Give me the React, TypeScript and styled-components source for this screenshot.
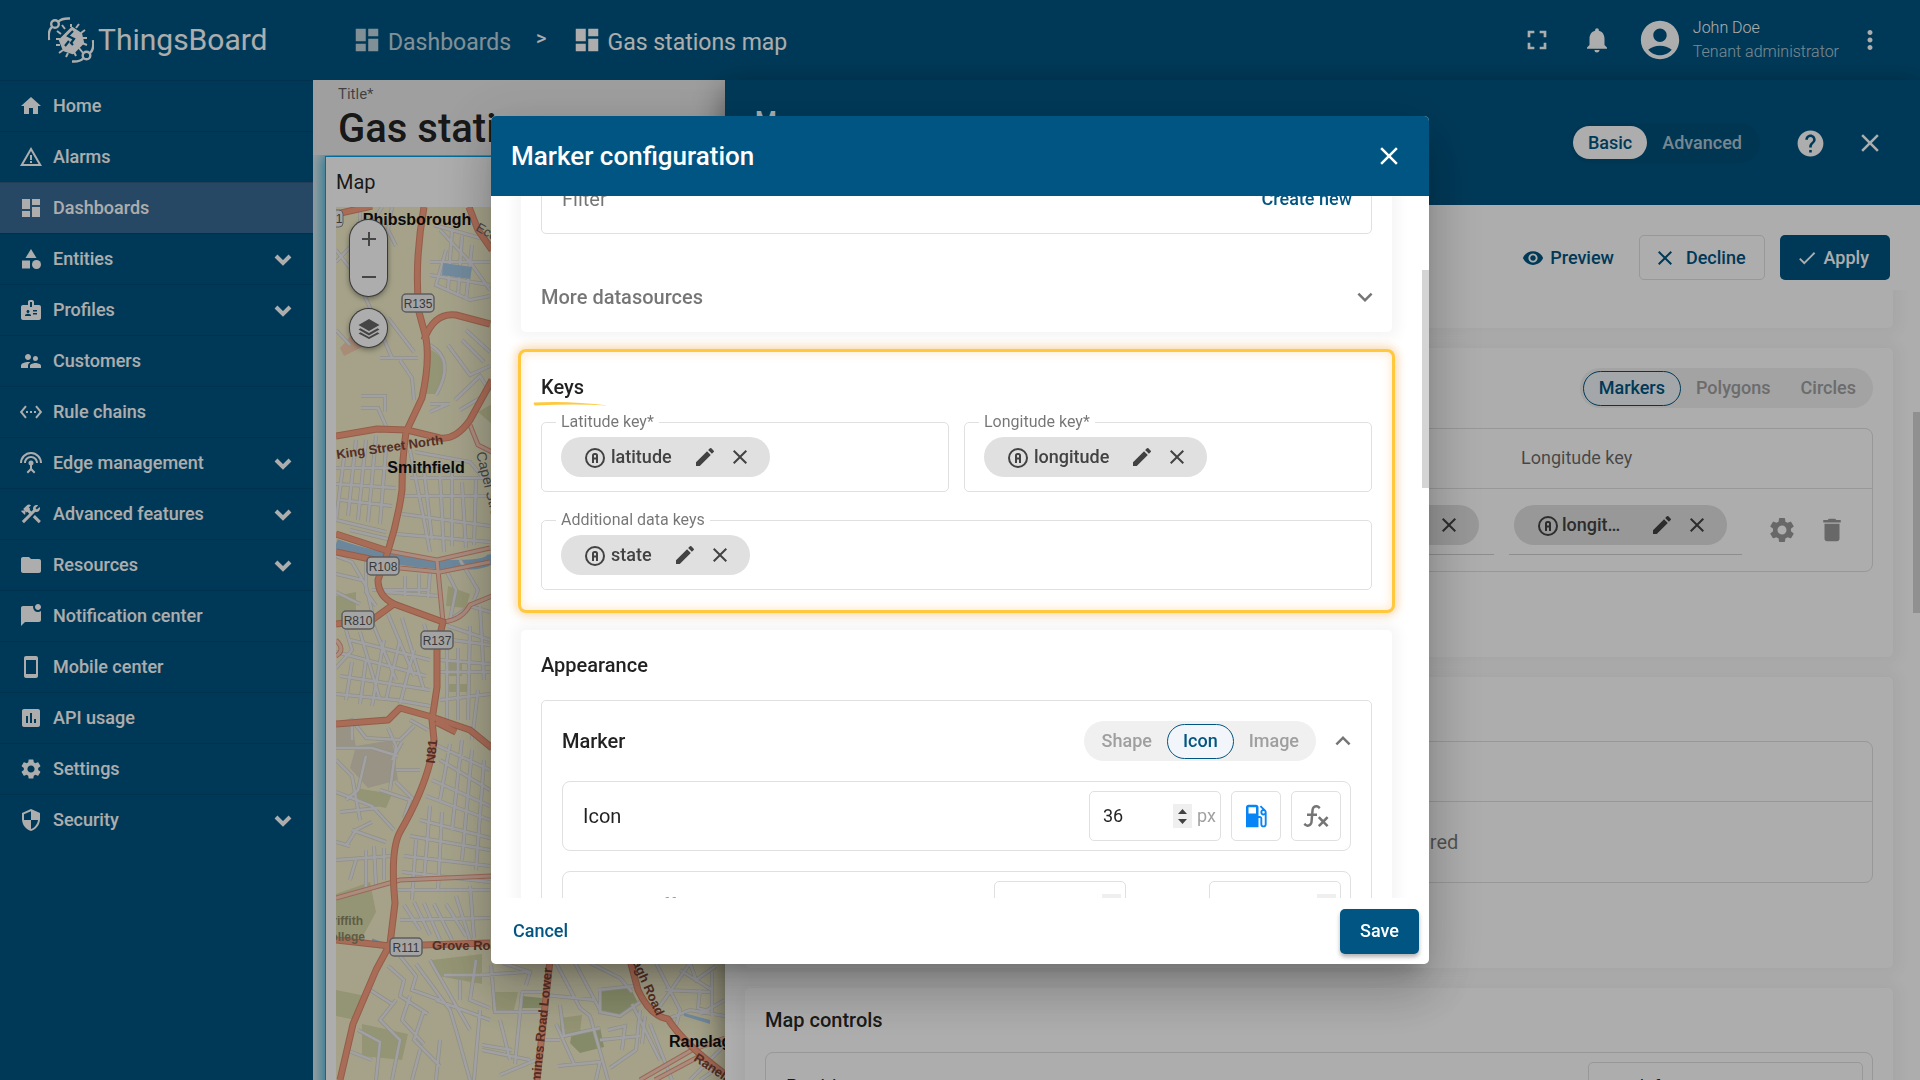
import React, { useLayoutEffect, useRef } from "react";
import styled, { createGlobalStyle, css } from "styled-components";
import type { IconType } from "react-icons";
import {
  MdAccountCircle,
  MdBadge,
  MdCategory,
  MdCheck,
  MdClose,
  MdConstruction,
  MdDashboard,
  MdDelete,
  MdEdit,
  MdExpandLess,
  MdExpandMore,
  MdFolder,
  MdFullscreen,
  MdHelp,
  MdHome,
  MdInsertChart,
  MdLocalGasStation,
  MdMarkChatUnread,
  MdMoreVert,
  MdNotifications,
  MdSecurity,
  MdSettings,
  MdSettingsEthernet,
  MdSettingsInputAntenna,
  MdStayCurrentPortrait,
  MdSupervisorAccount,
  MdVisibility,
  MdWarningAmber,
} from "react-icons/md";

const primary = "#005582";
const line = "#e0e0e0";

const GlobalStyle = createGlobalStyle`
  *, *::before, *::after { box-sizing: border-box; }
  body {
    margin: 0;
    font-family: Roboto, "Liberation Sans", sans-serif;
    font-size: 18px;
    line-height: 24px;
    color: rgba(0, 0, 0, 0.87);
  }
  button, input, select { font: inherit; color: inherit; }
  button { border: 0; padding: 0; background: none; cursor: pointer; }
  svg { display: block; flex: none; }
`;

/* ---------- shell ---------- */

const Page = styled.div`
  display: grid;
  grid-template-columns: 313px minmax(0, 1fr);
  height: 100vh;
  overflow: hidden;
  background: #ebebeb;
`;

const Sidebar = styled.aside`
  background: ${primary};
  color: #fff;
`;

const Logo = styled.div`
  display: flex;
  align-items: center;
  gap: 4px;
  height: 80px;
  padding-left: 48px;
  font-size: 30px;
  line-height: 36px;
`;

const Menu = styled.nav`
  display: flex;
  flex-direction: column;
`;

const MenuLink = styled.a<{ $active?: boolean }>`
  display: flex;
  align-items: center;
  gap: 10px;
  height: 51px;
  padding: 0 18px 0 19px;
  border-top: 1px solid rgba(0, 0, 0, 0.12);
  background: ${(p) => (p.$active ? "#3a6a96" : "transparent")};
  color: #fff;
  font-weight: 500;
  text-decoration: none;
  span { flex: 1; }
`;

const Main = styled.div`
  display: grid;
  grid-template-rows: 80px minmax(0, 1fr);
  min-width: 0;
`;

const TopBar = styled.header`
  display: flex;
  align-items: center;
  justify-content: space-between;
  padding: 0 35px 0 39px;
  background: ${primary};
  color: #fff;
`;

const Crumbs = styled.nav`
  display: flex;
  align-items: center;
  font-size: 23px;
  b { margin: -4px 25px 0; font-weight: 500; font-size: 20px; }
`;

const Crumb = styled.a<{ $dim?: boolean }>`
  display: flex;
  align-items: center;
  gap: 6px;
  color: #fff;
  opacity: ${(p) => (p.$dim ? 0.75 : 1)};
  text-decoration: none;
  span { padding-top: 5px; }
`;

const TopActions = styled.div`
  display: flex;
  align-items: center;
  gap: 25px;
`;

const User = styled.div`
  display: flex;
  align-items: center;
  gap: 10px;
  margin-right: -9px;
  font-size: 16px;
  font-weight: 300;
  small { display: block; font-size: 16px; opacity: 0.7; }
`;

const Content = styled.main`
  display: grid;
  grid-template-columns: minmax(0, 412fr) minmax(0, 1195fr);
  min-height: 0;
`;

const IconButton = styled.button<{ $size?: number }>`
  display: grid;
  place-items: center;
  width: ${(p) => p.$size ?? 30}px;
  height: ${(p) => p.$size ?? 30}px;
`;

/* ---------- dashboard ---------- */

const Dashboard = styled.section`
  display: grid;
  grid-template-rows: 75px minmax(0, 1fr);
  min-height: 0;
  overflow: hidden;
`;

const TitleBar = styled.div`
  padding: 5px 25px 0;
  overflow: hidden;
  white-space: nowrap;
  span { display: block; font-size: 15px; line-height: 18px; color: rgba(0, 0, 0, 0.6); }
  h1 { margin: 0; font-size: 40px; line-height: 52px; font-weight: 500; }
`;

const Canvas = styled.div`
  padding: 1px 0 0 12px;
  overflow: hidden;
`;

const Widget = styled.article`
  display: flex;
  flex-direction: column;
  width: 150%;
  height: 120%;
  padding: 0 10px;
  border: 1px solid #00a1e6;
  background: #fff;
  box-shadow: 0 0 14px 3px #2aaeda;
  h2 { margin: 0; padding: 13px 0; font-size: 20px; line-height: 24px; font-weight: 400; }
`;

const MapBox = styled.div`
  position: relative;
  flex: 1;
  overflow: hidden;
  background: #f4efcb;
`;

const MapControls = styled.div`
  position: absolute;
  top: 13px;
  left: 14px;
  display: flex;
  flex-direction: column;
  gap: 13px;
`;

const Pill = styled.div`
  display: flex;
  flex-direction: column;
  width: 37px;
  border-radius: 19px;
  background: #fff;
  color: #666;
  box-shadow: 0 0 0 1px #555, 0 2px 6px rgba(0, 0, 0, 0.5);
  button { display: grid; place-items: center; height: 38px; }
`;

/* ---------- details panel ---------- */

const Panel = styled.section`
  position: relative;
  display: flex;
  flex-direction: column;
  min-height: 0;
  background: #fff;
  box-shadow: 0 10px 30px rgba(0, 0, 0, 0.5);
`;

const PanelHeader = styled.header`
  display: flex;
  align-items: center;
  height: 125px;
  padding: 0 35px 0 30px;
  background: ${primary};
  color: #fff;
  h2 { flex: 1; margin: 0 0 42px; font-size: 25px; line-height: 30px; font-weight: 500; }
`;

const PanelButtons = styled.div`
  display: flex;
  justify-content: flex-end;
  gap: 15px;
  padding: 30px 30px 10px;
`;

const Button = styled.button<{ $kind?: "flat" | "outline" | "solid" }>`
  display: flex;
  align-items: center;
  gap: 6px;
  height: 45px;
  padding: 0 20px;
  border-radius: 5px;
  color: ${primary};
  font-weight: 500;
  ${(p) => p.$kind === "outline" && css`gap: 9px; padding: 0 18px 0 13px; border: 1px solid ${line};`}
  ${(p) =>
    p.$kind === "solid" &&
    css`background: ${primary}; color: #fff; box-shadow: 0 3px 4px rgba(0, 0, 0, 0.3);`}
`;

const ApplyButton = styled(Button)`
  padding: 0 21px 0 16px;
  box-shadow: none;
`;

const PreviewButton = styled(Button)`
  padding: 0 10px;
`;

const PanelBody = styled.div`
  display: flex;
  flex: 1;
  flex-direction: column;
  gap: 20px;
  min-height: 0;
  padding: 0 27px 0 20px;
  overflow: hidden;
`;

const Card = styled.section<{ $height?: number }>`
  flex: none;
  min-height: ${(p) => p.$height ?? 0}px;
  padding: 20px;
  border-radius: 5px;
  background: #fff;
  box-shadow: 0 0 13px 7px rgba(11, 17, 51, 0.04);
`;

const CutCard = styled(Card)`
  padding: 0;
  border-radius: 0 0 5px 5px;
`;

const CardTitle = styled.h3<{ $tall?: boolean }>`
  margin: 0 0 20px;
  font-size: 20px;
  line-height: ${(p) => (p.$tall ? 30 : 24)}px;
  font-weight: 500;
`;

const CardTop = styled.div`
  display: flex;
  align-items: center;
  justify-content: space-between;
  margin-bottom: 20px;
  ${CardTitle} { margin: 0; }
`;

const Frame = styled.div`
  border: 1px solid ${line};
  border-radius: 8px;
`;

const KeyTable = styled.table`
  width: 100%;
  border-collapse: collapse;
  table-layout: fixed;
  th {
    height: 59px;
    padding: 0 19px;
    border-bottom: 1px solid ${line};
    color: rgba(0, 0, 0, 0.6);
    font-weight: 400;
    text-align: left;
  }
  td { height: 82px; padding: 16px 8px 16px 7px; vertical-align: top; }
  col.key { width: 248px; }
  col.actions { width: 122px; }
`;

const KeyCell = styled.div`
  display: flex;
  height: 50px;
  padding: 0 15px 0 5px;
  border-bottom: 1px solid #d0d0d0;
`;

const RowActions = styled.div`
  display: flex;
  color: #9a9a9a;
`;

const EmptyTable = styled(Frame)`
  height: 142px;
  padding-top: 59px;
  p {
    display: grid;
    place-items: center;
    height: 80px;
    margin: 0;
    border-top: 1px solid ${line};
    color: rgba(0, 0, 0, 0.54);
    font-size: 20px;
  }
`;

const SettingRow = styled(Frame)`
  display: flex;
  align-items: center;
  gap: 10px;
  height: 70px;
  padding: 0 9px 0 20px;
  font-size: 20px;
  > span:first-child { flex: 1; }
`;

const PositionSelect = styled.select`
  width: 275px;
  height: 50px;
  padding: 0 16px;
  border: 1px solid ${line};
  border-radius: 5px;
  background: #fff;
  appearance: none;
  font-size: 18px;
`;

const Thumb = styled.div<{ $top: number; $height: number }>`
  position: absolute;
  right: 0;
  top: ${(p) => p.$top}px;
  width: 7px;
  height: ${(p) => p.$height}px;
  background: #d4d4d4;
`;

/* ---------- toggle ---------- */

const ToggleBox = styled.div<{ $dark?: boolean }>`
  display: flex;
  align-items: center;
  height: 40px;
  padding: 0 ${(p) => (p.$dark ? 3 : 2)}px 0 3px;
  border-radius: 20px;
  background: ${(p) => (p.$dark ? "rgba(0, 0, 0, 0.06)" : "#f0f0f0")};
`;

const ToggleItem = styled.button<{ $dark?: boolean; $on?: boolean }>`
  height: 35px;
  padding: 0 15px;
  border-radius: 18px;
  color: ${(p) => (p.$dark ? "rgba(255, 255, 255, 0.7)" : "#9f9f9f")};
  font-weight: 500;
  ${(p) =>
    p.$on &&
    (p.$dark
      ? css`height: 33px; background: #fff; color: ${primary};`
      : css`border: 1px solid ${primary}; background: #f2f6fa; color: ${primary};`)}
`;

function Toggle({ items, on, dark }: { items: string[]; on: string; dark?: boolean }) {
  return (
    <ToggleBox $dark={dark} role="group">
      {items.map((name) => (
        <ToggleItem key={name} type="button" $dark={dark} $on={name === on} aria-pressed={name === on}>
          {name}
        </ToggleItem>
      ))}
    </ToggleBox>
  );
}

/* ---------- key chip ---------- */

const ChipBox = styled.div<{ $fill?: boolean }>`
  display: flex;
  align-items: center;
  width: ${(p) => (p.$fill ? "100%" : "auto")};
  height: 40px;
  padding: 0 18px 0 22px;
  border-radius: 20px;
  background: #e0e0e0;
  color: #424242;
  font-weight: 500;
`;

const ChipName = styled.span<{ $fill?: boolean }>`
  flex: ${(p) => (p.$fill ? 1 : "none")};
  min-width: 0;
  margin: 0 21px 0 ${(p) => (p.$fill ? 2 : 4)}px;
  overflow: hidden;
  text-overflow: ellipsis;
  white-space: nowrap;
`;

const ChipClose = styled(IconButton)`
  margin-left: 11px;
`;

function Chip({ name, fill }: { name: string; fill?: boolean }) {
  return (
    <ChipBox $fill={fill}>
      <svg width="24" height="24" viewBox="0 0 24 24" fill="none" stroke="currentColor" strokeWidth="2">
        <circle cx="12" cy="13" r="9" />
        <path d="M10 18v-7.500q0-1.500 1.500-1.500h1q1.500 0 1.500 1.500v7.500M10 13.500h4" />
      </svg>
      <ChipName $fill={fill}>{name}</ChipName>
      <IconButton type="button" $size={24} aria-label={`Edit ${name}`}><MdEdit size={24} /></IconButton>
      <ChipClose type="button" $size={24} aria-label={`Remove ${name}`}><MdClose size={24} /></ChipClose>
    </ChipBox>
  );
}

/* ---------- dialog ---------- */

const Backdrop = styled.div`
  position: fixed;
  inset: 0;
  display: flex;
  align-items: center;
  justify-content: center;
  background: rgba(0, 0, 0, 0.32);
`;

const Dialog = styled.div`
  width: 938px;
  max-width: 90vw;
  overflow: hidden;
  border-radius: 5px;
  background: #fff;
`;

const DialogShadow = styled.div`
  border-radius: 5px;
  box-shadow:
    0 14px 19px -9px rgba(0, 0, 0, 0.2),
    0 30px 48px 4px rgba(0, 0, 0, 0.14),
    0 11px 58px 10px rgba(0, 0, 0, 0.12);
`;

const DialogHeader = styled.header`
  display: flex;
  align-items: center;
  justify-content: space-between;
  height: 80px;
  padding: 0 25px 0 20px;
  background: ${primary};
  color: #fff;
  h2 { margin: 0; font-size: 26px; line-height: 32px; font-weight: 500; }
`;

const DialogMiddle = styled.div`
  position: relative;
`;

const DialogBody = styled.div`
  display: flex;
  flex-direction: column;
  gap: 20px;
  height: 65vh;
  padding: 30px 37px 30px 30px;
  overflow-y: auto;
  scrollbar-width: none;
`;

const DialogFooter = styled.footer`
  display: flex;
  align-items: center;
  justify-content: space-between;
  height: 66px;
  padding: 0 10px 0 2px;
`;

const Fields = styled.div`
  display: grid;
  grid-template-columns: 1fr 1fr;
  gap: 28px 15px;
`;

const Field = styled.fieldset<{ $wide?: boolean }>`
  display: flex;
  grid-column: ${(p) => (p.$wide ? "1 / -1" : "auto")};
  height: 80px;
  margin: -10px 0 0;
  padding: 5px 19px;
  border: 1px solid ${line};
  border-radius: 5px;
  legend {
    margin-left: -5px;
    padding: 0 5px;
    font-size: 16px;
    line-height: 20px;
    color: rgba(0, 0, 0, 0.54);
  }
`;

const FilterField = styled.div`
  display: flex;
  align-items: center;
  height: 70px;
  padding: 0 19px 0 20px;
  border: 1px solid ${line};
  border-radius: 5px;
  input { flex: 1; border: 0; outline: 0; padding: 0; font-size: 20px; }
  input::placeholder { color: rgba(0, 0, 0, 0.54); opacity: 1; }
  button { color: ${primary}; font-weight: 500; }
`;

const FilterCard = styled(Card)`
  padding-bottom: 0;
`;

const MoreRow = styled.button`
  display: flex;
  align-items: center;
  justify-content: space-between;
  width: 100%;
  height: 70px;
  margin-top: 28px;
  color: rgba(0, 0, 0, 0.54);
  font-size: 20px;
  font-weight: 500;
  svg { margin-right: -8px; }
`;

const KeysCard = styled(Card)`
  box-shadow:
    0 0 0 3px #ffc83d,
    0 0 10px 5px rgba(255, 170, 60, 0.4),
    inset 0 0 8px 2px rgba(255, 170, 60, 0.22),
    0 0 13px 7px rgba(11, 17, 51, 0.04);
`;

const KeysTitle = styled(CardTitle)`
  position: relative;
  svg { position: absolute; left: -8px; top: 29px; }
`;

const MarkerBox = styled(Frame)`
  display: flex;
  flex-direction: column;
  gap: 20px;
  padding: 20px;
  border-radius: 5px;
`;

const MarkerTop = styled.div`
  display: flex;
  align-items: center;
  height: 40px;
  h4 { flex: 1; margin: 0; font-size: 20px; font-weight: 500; }
  button[aria-label] { margin: 0 -7px 0 12px; color: #757575; }
`;

const NumberShell = styled.div`
  display: flex;
  align-items: center;
  gap: 5px;
  width: 132px;
  height: 50px;
  padding: 0 4px 0 13px;
  border: 1px solid ${line};
  border-radius: 5px;
  font-size: 18px;
  input {
    flex: 1;
    width: 0;
    padding: 0;
    border: 0;
    outline: 0;
    appearance: textfield;
  }
  input::-webkit-inner-spin-button { display: none; }
  svg { background: #efefef; }
  span { color: rgba(0, 0, 0, 0.38); }
`;

const SquareButton = styled(IconButton)<{ $blue?: boolean }>`
  border: 1px solid ${line};
  border-radius: 5px;
  color: ${(p) => (p.$blue ? "#0784f5" : "#757575")};
`;

const OffsetLabel = styled.label`
  display: flex;
  align-items: center;
  gap: 12px;
  color: rgba(0, 0, 0, 0.54);
  font-size: 18px;
`;

function NumberField({ value, label, unit }: { value: number; label?: string; unit?: string }) {
  return (
    <NumberShell>
      <input type="number" defaultValue={value} aria-label={label} />
      <svg width="19" height="24" viewBox="0 0 19 24" fill="#424242">
        <path d="M5 10l4.500-5 4.500 5zM5 15l4.500 5 4.500-5z" />
      </svg>
      {unit && <span>{unit}</span>}
    </NumberShell>
  );
}

/* ---------- drawings ---------- */

function LogoMark() {
  return (
    <svg width="46" height="46" viewBox="0 0 46 46" fill="none" stroke="#fff" strokeWidth="2.400">
      <path d="M1 23C0 15 2 11 5 9.500" />
      <circle cx="7" cy="7" r="3.800" />
      <path d="M10.500 4.500Q14 1 22 1.500" />
      <path d="M45 23C46 31 44 35 41 36.500" />
      <circle cx="38.500" cy="38.500" r="3.800" />
      <path d="M35 41.500Q32 45 24 44.500" />
      <path d="M24 11l9 6 2 9-10 10-9-3-4-10z" fill="#fff" strokeLinejoin="round" />
      <path strokeWidth="2" d="M17 12l-3-4M23 10V7M28 11l3-4M33 16l4-3M35 21h4M34 26l5 2M31 31l4 5M26 35l2 4M20 36l-2 4M15 33l-4 3M12 28H8M12 22H8M13 17l-4-3" />
      <path stroke={primary} strokeWidth="2.200" d="M25 14l-5 5 6 3-3 4 2 2M17 29l4-5" />
    </svg>
  );
}

function Chevron() {
  return (
    <svg width="24" height="24" viewBox="0 0 24 24" fill="none" stroke="currentColor" strokeWidth="4">
      <path d="M5 9l7 7 7-7" />
    </svg>
  );
}

function FunctionIcon() {
  return (
    <svg width="30" height="30" viewBox="0 0 24 24" fill="currentColor">
      <path d="M12.420 5.290C11.320 5.190 10.350 6 10.250 7.110L10 10H12.820V12H9.820L9.380 17.070C9.180 19.270 7.240 20.900 5.040 20.700C3.790 20.590 2.660 19.900 2 18.830L3.500 17.330C3.830 18.380 4.960 18.970 6 18.630C6.780 18.390 7.330 17.700 7.400 16.890L7.820 12H4.820V10H8L8.270 6.930C8.460 4.730 10.390 3.100 12.600 3.280C13.860 3.390 15 4.090 15.660 5.170L14.160 6.670C13.910 5.900 13.230 5.360 12.420 5.290M22 13.650L20.590 12.240L17.760 15.070L14.930 12.240L13.500 13.650L16.350 16.500L13.500 19.330L14.930 20.740L17.760 17.910L20.590 20.740L22 19.330L19.170 16.500L22 13.650Z" />
    </svg>
  );
}

function LayersIcon() {
  return (
    <svg width="24" height="22" viewBox="0 0 24 22" fill="currentColor">
      <path d="M12 2L1.500 8 12 14l10.500-6zM20.500 11.200L12 16l-8.500-4.800-2 1.200L12 18.400l10.500-6zM20.500 15.200L12 20l-8.500-4.800-2 1.200L12 22l10.500-5.600z" />
    </svg>
  );
}

const streets = [
  "M336 262L352 245 372 224 382 207M336 250L350 268 362 290 380 330 392 358M360 207V228M392 207L388 230 396 246",
  "M430 262H490M440 230L470 262 490 290M446 250L436 285 470 300 490 296M452 230L448 290M462 236L458 296M430 275L490 285M434 225L480 238M472 245L466 300",
  "M388 318L414 352M380 358H418M336 330L350 345M361 396H385V412M361 408H378L386 426M400 360L412 378 414 400",
  "M430 345Q456 360 436 395M448 345L470 375 490 366M430 404H450M455 400L480 376 490 392M460 410L485 395M430 412L448 404M466 330L490 352M462 340L484 362",
  "M345 450L336 520M356 440L348 516M366 440L358 520M376 436L368 522M386 448L380 524M336 468H400M336 484L396 488M340 500L392 506M336 520L386 532M350 530L392 540",
  "M410 450L424 520 430 552M424 470L432 540M440 476L444 552M452 470V546M462 482L466 548M476 480L474 545M410 478H490M404 496H490M402 514L490 526M396 534L490 542M415 452L470 462 490 486M412 466H440",
  "M336 556L352 562 366 586 372 612M336 574L362 580M366 560L366 592 376 606M372 590H428M384 592L440 596M405 576V596M419 574V594M430 572L428 598M336 592L360 604",
  "M446 570L456 590 450 620 470 606 490 612M460 560L478 590 474 600M448 626L490 640M452 640L490 645M470 626L468 720M480 606L484 680M440 660L490 664M440 672H490M440 700L490 694M447 650V720M458 648V720M478 690L472 740",
  "M346 630L352 650 336 668M360 632L380 700M372 622L396 680M388 614L414 676M402 618L424 690M350 640L430 660M336 652L426 676M340 676L430 690M352 662L346 700M366 660L360 704M336 694L396 700 430 706M384 640L372 706M400 640L386 700M414 650L400 704M424 624L432 650",
  "M336 726L352 720 366 738 400 740 414 726M352 722V740M336 748L372 748 398 756M366 756L358 790 346 800M388 728L396 746 390 790M402 742L392 760M410 720L428 730M336 760L352 776 360 820M396 770L420 770M396 782L414 800M380 790L410 800 404 818",
  "M436 745L490 770M440 760L490 790M432 780L490 806M426 796L490 820M450 744L440 800M462 740L452 830M472 750L462 860M484 760L476 870M420 820L490 838M410 836L490 850M404 856L490 866M430 806L424 880M442 812L438 890M402 872L490 882M416 840L412 900",
  "M336 792L372 806 394 830M340 812L378 808M352 830L386 842M346 846L356 830 372 822M356 860L350 880M366 850V890M374 846L376 886M336 860L392 856M384 848V880M336 842L350 846M398 890L490 890M404 905L420 930M414 902L430 935M424 903L440 940M434 904L452 940M446 904L466 936M456 896L470 940M470 886L474 938M400 920L490 918",
  "M400 956L416 976 412 990 440 1000M388 966L404 980 400 996 428 1014M416 964L450 1010 456 1030M430 960L470 1030M396 1000L380 1020 400 1040 392 1080M410 996L402 1020 424 1044M424 1010L414 1040 440 1066M436 1000L490 1020M444 975L490 975M460 980V1000M476 960L470 1000 490 1008M370 990L392 1004M358 1030L380 1042 376 1080M346 1050L372 1060M420 1050L412 1080M440 1040L436 1080M456 1030L470 1080M480 1010L474 1080",
  "M491 965L495 1012H550M480 975L526 972M503 963L530 972 526 985M522 992L515 1064M521 992H546M512 1050L482 1045M545 995L595 1000M556 963L580 1008 590 1016 608 1080M575 963L600 1010M590 963L620 978 632 992M598 990L634 986M600 988V1012L620 1016 640 1002M560 1005L564 1036 600 1028M556 1024L574 1064M500 1020L510 1060M482 1050L530 1060M558 1066L600 1062 596 1080",
  "M608 1030L625 1026 622 1050M600 1040L640 1036M640 1010L636 1050 610 1068M645 1016L642 1044M632 1004L660 1060M650 1024L672 1080M660 1006L690 963M665 990L710 992M680 970L712 990M712 972V1016M700 990L698 1008 710 1012M665 1020L690 1010 725 1016M690 963L696 980 716 966M725 1000L700 1014M725 1045L690 1080M715 1070L700 1080M656 963L680 1010 676 1026M500 1075L536 1060M545 1040H560",
];

const shields: [string, number, number][] = [
  ["R135", 418, 303],
  ["R108", 383, 566],
  ["R810", 358, 620],
  ["R137", 437, 640],
  ["R111", 406, 947],
];

const majorRoads =
  "M424 207Q414 262 419 312L426 338Q430 362 422 398L406 432Q402 460 402 490 398 520 388 551L378 580Q378 596 394 604L443 622 437 647V687L432 720 434 740Q430 780 400 832 390 850 395 903L390 944 376 970 353 1024 340 1080" +
  "M424 340Q434 312 456 315L490 324M469 207L478 230 492 250M336 436L377 429 407 430 440 438Q456 440 470 420L492 380M336 534L388 551M336 552L380 561M336 624L372 620 394 604" +
  "M336 724L388 720 400 708 432 717 470 730 492 748M436 722L456 732M336 940L390 946 490 943M550 960L537 1080M630 960L638 990Q650 1016 668 1019 684 1044 725 1074M336 214L372 206";

const mediumRoads =
  "M388 551L437 560 490 548M400 568L440 572 490 562M437 560L443 622M443 622Q462 620 470 605L492 596M470 425L478 445 492 452M336 898L400 880 492 876M640 1080L692 1050 725 1038M655 1080L700 1056M336 640Q346 650 336 656";

function MapDrawing() {
  return (
    <svg width="590" height="980" viewBox="336 207 590 980" fill="none">
      <g fill="#dbdcab">
        <path d="M428 348q26 12 8 46h-10zM336 596l20-4v24l-20 6zM448 586l22 8-4 14-20-2zM446 660h16v16h-16zM446 684h24v8h-24zM336 894l34-12 6 30-14 26h-26zM356 788l36 6-6 14-30-6zM478 412l14-8v20zM432 960l50-6v30l-44-8z" />
        <path d="M492 992h26l-4 18h-22zM560 1018l22-3-2 18-20 4zM336 990l30 6-10 24-20-4zM362 1024l46 10-6 26-40-4z" />
      </g>
      <g fill="#c5cd9a">
        <path d="M522 996l20 2v10h-20zM602 989l28-2 8 16-16 12-20-1zM572 1032l28-5 4 20-24 6-10-10z" />
      </g>
      <path fill="#e0d9c4" d="M336 726l16-4 4 26h-20zM356 746l36-6 6 40-30 8-18-20z" />
      <path fill="#fbc0a4" opacity=".7" d="M340 348l18-20 6 18-20 10z" />
      <path stroke="#9fc8e6" strokeWidth="10" d="M336 544Q380 560 437 564T492 554" />
      <path stroke="#9fc8e6" strokeWidth="3" d="M372 940L388 946" />
      <g stroke="#d6d3c4" strokeWidth="4">
        {streets.map((d) => <path key={d} d={d} />)}
      </g>
      <g stroke="#ededf2" strokeWidth="2.500">
        {streets.map((d) => <path key={d} d={d} />)}
      </g>
      <path fill="#a9cdea" d="M443 263l29 4-2 12-28-4zM684 1013l26 7v4l-26-8z" />
      <path stroke="#e59a80" strokeWidth="5" d={mediumRoads} />
      <path stroke="#fcd0bd" strokeWidth="3" d={mediumRoads} />
      <path stroke="#d98a6c" strokeWidth="7" strokeLinejoin="round" d={majorRoads} />
      <path stroke="#fa9f80" strokeWidth="5" strokeLinejoin="round" d={majorRoads} />
      <g fontFamily='"Liberation Sans", Arial, sans-serif' fill="#555" fontSize="13" textAnchor="middle">
        {shields.map(([name, x, y]) => (
          <g key={name}>
            <rect x={x - 16} y={y - 9} width="32" height="18" rx="4" fill="#f2f2f2" stroke="#8a8a8a" strokeWidth="1.500" />
            <text x={x} y={y + 5} fontSize="12">{name}</text>
          </g>
        ))}
        <rect x="326" y="210" width="17" height="17" rx="4" fill="#f2f2f2" stroke="#8a8a8a" />
        <text x="339" y="223" fontSize="12">1</text>
        <g fontWeight="700" fill="#111" fontSize="16">
          <text x="417" y="225">Phibsborough</text>
          <text x="426" y="473">Smithfield</text>
          <text x="669" y="1047" textAnchor="start">Ranelagh</text>
        </g>
        <g fontWeight="700" fill="#7d4536">
          <text textAnchor="start" transform="translate(337 459) rotate(-8)">King Street North</text>
          <text transform="translate(436 752) rotate(-84)">N81</text>
          <text textAnchor="start" x="432" y="950">Grove Road</text>
          <text textAnchor="start" transform="translate(537 1112) rotate(-84)">Rathmines Road Lower</text>
          <text textAnchor="start" transform="translate(618 930) rotate(66)">Ranelagh Road</text>
          <text textAnchor="start" transform="translate(693 1060) rotate(34)">Ranelagh</text>
        </g>
        <g fill="#666">
          <text textAnchor="start" transform="translate(476 453) rotate(76)" fontSize="14">Capel Street</text>
          <text textAnchor="start" transform="translate(475 230) rotate(30)">Eccles</text>
        </g>
        <g fill="#8b8866" textAnchor="end" fontWeight="700" fontSize="12">
          <text x="363" y="925">Griffith</text>
          <text x="365" y="941">College</text>
        </g>
      </g>
    </svg>
  );
}

/* ---------- data ---------- */

const menu: { icon: IconType; name: string; more?: boolean; active?: boolean }[] = [
  { icon: MdHome, name: "Home" },
  { icon: MdWarningAmber, name: "Alarms" },
  { icon: MdDashboard, name: "Dashboards", active: true },
  { icon: MdCategory, name: "Entities", more: true },
  { icon: MdBadge, name: "Profiles", more: true },
  { icon: MdSupervisorAccount, name: "Customers" },
  { icon: MdSettingsEthernet, name: "Rule chains" },
  { icon: MdSettingsInputAntenna, name: "Edge management", more: true },
  { icon: MdConstruction, name: "Advanced features", more: true },
  { icon: MdFolder, name: "Resources", more: true },
  { icon: MdMarkChatUnread, name: "Notification center" },
  { icon: MdStayCurrentPortrait, name: "Mobile center" },
  { icon: MdInsertChart, name: "API usage" },
  { icon: MdSettings, name: "Settings" },
  { icon: MdSecurity, name: "Security", more: true },
];

function KeyField({ label, name, wide }: { label: string; name: string; wide?: boolean }) {
  return (
    <Field $wide={wide}>
      <legend>{label}</legend>
      <Chip name={name} />
    </Field>
  );
}

function MarkerDialog() {
  const body = useRef<HTMLDivElement>(null);
  useLayoutEffect(() => {
    if (body.current) body.current.scrollTop = 82;
  }, []);

  return (
    <Backdrop>
      <DialogShadow>
        <Dialog role="dialog" aria-modal="true" aria-labelledby="dialog-title">
          <DialogHeader>
            <h2 id="dialog-title">Marker configuration</h2>
            <IconButton type="button" aria-label="Close"><MdClose size={30} /></IconButton>
          </DialogHeader>
          <DialogMiddle>
            <DialogBody ref={body}>
              <FilterCard>
                <FilterField>
                  <input placeholder="Filter" aria-label="Filter" />
                  <button type="button">Create new</button>
                </FilterField>
                <MoreRow type="button">
                  More datasources
                  <MdExpandMore size={30} />
                </MoreRow>
              </FilterCard>
              <KeysCard>
                <KeysTitle $tall>
                  Keys
                  <svg width="76" height="6" viewBox="0 0 76 6">
                    <path d="M1 1.500Q36-.5 75 4.500 40 2.500 2 4.500 0 3 1 1.500z" fill="#ffc83d" />
                  </svg>
                </KeysTitle>
                <Fields>
                  <KeyField label="Latitude key*" name="latitude" />
                  <KeyField label="Longitude key*" name="longitude" />
                  <KeyField label="Additional data keys" name="state" wide />
                </Fields>
              </KeysCard>
              <Card>
                <CardTitle $tall>Appearance</CardTitle>
                <MarkerBox>
                  <MarkerTop>
                    <h4>Marker</h4>
                    <Toggle items={["Shape", "Icon", "Image"]} on="Icon" />
                    <IconButton type="button" aria-label="Collapse"><MdExpandLess size={30} /></IconButton>
                  </MarkerTop>
                  <SettingRow>
                    <span>Icon</span>
                    <NumberField value={36} label="Icon size" unit="px" />
                    <SquareButton type="button" $size={50} $blue aria-label="Choose icon"><MdLocalGasStation size={30} /></SquareButton>
                    <SquareButton type="button" $size={50} aria-label="Function"><FunctionIcon /></SquareButton>
                  </SettingRow>
                  <SettingRow>
                    <span>Marker offset</span>
                    <OffsetLabel>Horizontal<NumberField value={0} /></OffsetLabel>
                    <OffsetLabel>Vertical<NumberField value={0} /></OffsetLabel>
                  </SettingRow>
                </MarkerBox>
              </Card>
            </DialogBody>
            <Thumb $top={74} $height={218} />
          </DialogMiddle>
          <DialogFooter>
            <Button type="button">Cancel</Button>
            <Button type="button" $kind="solid">Save</Button>
          </DialogFooter>
        </Dialog>
      </DialogShadow>
    </Backdrop>
  );
}

const HelpGroup = styled.div`
  display: flex;
  gap: 30px;
  margin-left: 35px;
`;

function DetailsPanel() {
  return (
    <Panel>
      <PanelHeader>
        <h2>Map</h2>
        <Toggle items={["Basic", "Advanced"]} on="Basic" dark />
        <HelpGroup>
          <IconButton type="button" aria-label="Help"><MdHelp size={31} /></IconButton>
          <IconButton type="button" aria-label="Close details"><MdClose size={30} /></IconButton>
        </HelpGroup>
      </PanelHeader>
      <PanelButtons>
        <PreviewButton type="button"><MdVisibility size={22} />Preview</PreviewButton>
        <Button type="button" $kind="outline"><MdClose size={24} />Decline</Button>
        <ApplyButton type="button" $kind="solid"><MdCheck size={22} />Apply</ApplyButton>
      </PanelButtons>
      <PanelBody>
        <CutCard $height={38} />
        <Card $height={309}>
          <CardTop>
            <CardTitle>Overlays</CardTitle>
            <Toggle items={["Markers", "Polygons", "Circles"]} on="Markers" />
          </CardTop>
          <Frame>
            <KeyTable>
              <colgroup>
                <col /><col className="key" /><col className="key" /><col className="actions" />
              </colgroup>
              <thead>
                <tr><th>Source</th><th>Latitude key</th><th>Longitude key</th><th aria-label="Actions" /></tr>
              </thead>
              <tbody>
                <tr>
                  <td />
                  <td><KeyCell><Chip name="latitude" fill /></KeyCell></td>
                  <td><KeyCell><Chip name="longitude" fill /></KeyCell></td>
                  <td>
                    <RowActions>
                      <IconButton type="button" $size={50} aria-label="Configure"><MdSettings size={30} /></IconButton>
                      <IconButton type="button" $size={50} aria-label="Delete"><MdDelete size={30} /></IconButton>
                    </RowActions>
                  </td>
                </tr>
              </tbody>
            </KeyTable>
          </Frame>
        </Card>
        <Card $height={291}>
          <CardTitle>Additional data sources</CardTitle>
          <EmptyTable><p>No data sources are configured</p></EmptyTable>
        </Card>
        <Card>
          <CardTitle>Map controls</CardTitle>
          <SettingRow>
            <span>Position</span>
            <PositionSelect aria-label="Position" defaultValue="Top left">
              <option>Top left</option>
            </PositionSelect>
          </SettingRow>
        </Card>
      </PanelBody>
      <Thumb $top={332} $height={201} />
    </Panel>
  );
}

export default function App() {
  return (
    <>
      <GlobalStyle />
      <Page>
        <Sidebar>
          <Logo><LogoMark />ThingsBoard</Logo>
          <Menu>
            {menu.map(({ icon: Icon, name, more, active }) => (
              <MenuLink key={name} href="#" $active={active}>
                <Icon size={24} />
                <span>{name}</span>
                {more && <Chevron />}
              </MenuLink>
            ))}
          </Menu>
        </Sidebar>
        <Main>
          <TopBar>
            <Crumbs>
              <Crumb href="#" $dim><MdDashboard size={30} /><span>Dashboards</span></Crumb>
              <b>&gt;</b>
              <Crumb href="#"><MdDashboard size={30} /><span>Gas stations map</span></Crumb>
            </Crumbs>
            <TopActions>
              <IconButton type="button" $size={40} aria-label="Fullscreen"><MdFullscreen size={32} /></IconButton>
              <IconButton type="button" aria-label="Notifications"><MdNotifications size={30} /></IconButton>
              <User>
                <MdAccountCircle size={46} />
                <div>John Doe<small>Tenant administrator</small></div>
              </User>
              <IconButton type="button" aria-label="More"><MdMoreVert size={30} /></IconButton>
            </TopActions>
          </TopBar>
          <Content>
            <Dashboard>
              <TitleBar>
                <span>Title*</span>
                <h1>Gas stations map</h1>
              </TitleBar>
              <Canvas>
                <Widget>
                  <h2>Map</h2>
                  <MapBox>
                    <MapDrawing />
                    <MapControls>
                      <Pill>
                        <button type="button" aria-label="Zoom in">
                          <svg width="16" height="16" stroke="currentColor" strokeWidth="2"><path d="M8 1v14M1 8h14" /></svg>
                        </button>
                        <button type="button" aria-label="Zoom out">
                          <svg width="16" height="16" stroke="currentColor" strokeWidth="2"><path d="M1 8h14" /></svg>
                        </button>
                      </Pill>
                      <Pill>
                        <button type="button" aria-label="Layers"><LayersIcon /></button>
                      </Pill>
                    </MapControls>
                  </MapBox>
                </Widget>
              </Canvas>
            </Dashboard>
            <DetailsPanel />
          </Content>
        </Main>
      </Page>
      <MarkerDialog />
    </>
  );
}
